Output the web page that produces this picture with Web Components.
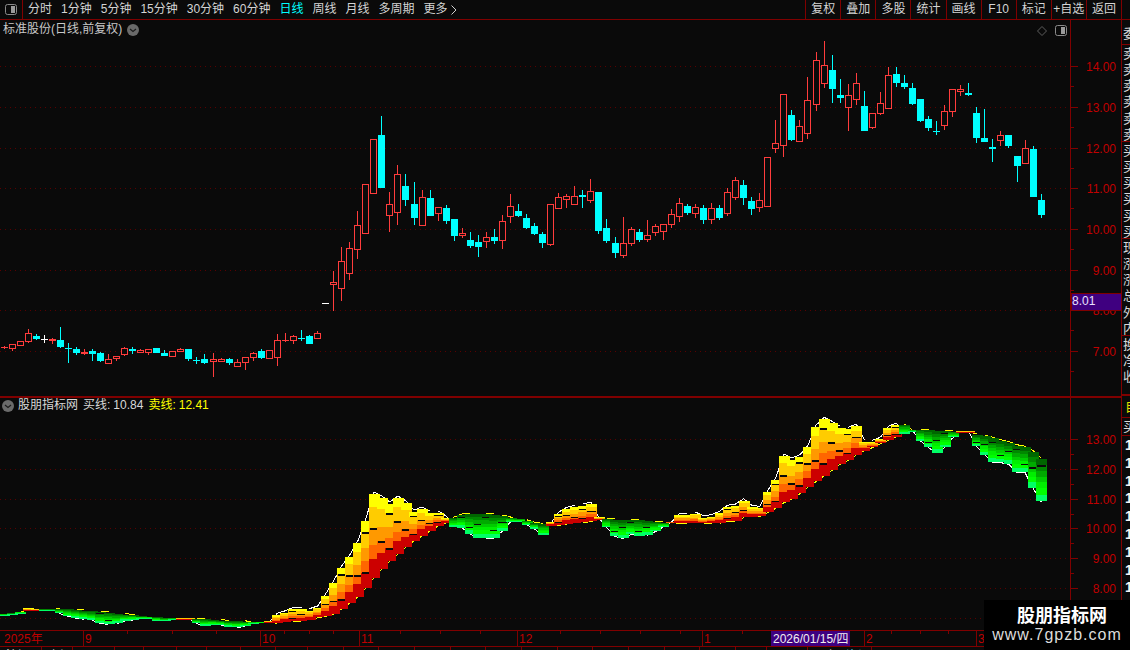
<!DOCTYPE html>
<html lang="zh">
<head>
<meta charset="utf-8">
<title>标准股份</title>
<style>
  html, body { margin: 0; padding: 0; background: #0a0a0a; }
</style>
</head>
<body>
<stock-terminal>
  <tool-bar slot="top"></tool-bar>
  <kline-panel slot="kline" title-text="标准股份(日线,前复权)"></kline-panel>
  <indicator-panel slot="indicator"></indicator-panel>
  <date-axis slot="dates"></date-axis>
  <quote-strip slot="quote"></quote-strip>
  <status-strip slot="status"></status-strip>
  <water-mark slot="mark"></water-mark>
</stock-terminal>

<script>
const SVG_FONT = '"Liberation Sans", "Noto Sans CJK SC", sans-serif';
const AXIS_RED = '#800000';
const LABEL_RED = '#c00000';
const GRID_RED = '#5a0000';

// every candle sits at this x, pitch read off the reference
const candleX = i => 4 + 8.04 * i;

// [boxTop, boxBottom, wickTop, wickBottom, colour], in 3x zoom units from an origin
function seg(origin, rows) {
    return rows.map(r => [
        origin + r[0] / 3, origin + r[1] / 3,
        origin + r[2] / 3, origin + r[3] / 3, r[4]
    ]);
}

const CANDLES = [
    ...seg(310, [
        [111,114,108,118,'r'],[103,116,103,125,'r'],[94,107,94,110,'r'],[70,95,57,98,'r'],
        [78,88,73,92,'c'],[87,90,76,101,'w'],[87,92,85,104,'R'],[90,110,51,114,'c'],
        [114,117,99,158,'c'],[117,129,112,137,'c'],[125,131,117,135,'R'],[123,131,118,155,'c'],
        [129,152,125,155,'c'],[148,161,132,161,'r'],[139,147,139,155,'r'],[115,136,111,138,'r'],
        [117,123,111,131,'c'],[121,128,118,129,'r'],[118,128,118,137,'r'],[114,129,114,130,'c'],
        [129,137,120,137,'c'],[124,140,124,140,'r'],[118,125,115,128,'r'],[117,147,117,152,'c'],
        [150,153,141,161,'c'],[147,159,132,161,'c'],[148,155,128,201,'r'],[148,155,145,158,'r'],
        [148,158,144,164,'c'],[157,170,148,170,'r'],[141,158,141,180,'r'],[130,143,125,153,'r'],
        [124,144,118,149,'c'],[121,146,121,146,'r'],[91,143,72,167,'r'],[90,93,69,96,'R'],
        [79,92,76,102,'r'],[85,88,60,92,'c'],[79,101,76,101,'c'],[70,86,63,87,'r']
    ]),
    ...seg(100, [
        [609,611,609,611,'w'],
        [547,556,513,632,'r'],[484,566,441,602,'r'],[445,521,427,540,'r'],[376,449,333,476,'r'],
        [253,401,253,401,'r'],[118,281,118,281,'r'],[105,264,48,264,'c'],[313,347,276,396,'r'],
        [223,338,195,375,'r'],[258,300,222,318,'c'],[312,354,246,375,'c'],[292,377,270,377,'r'],
        [294,348,270,348,'c'],[322,341,322,363,'r'],[324,363,315,372,'c'],[357,408,357,423,'c'],
        [400,407,384,414,'r'],[420,438,396,444,'c'],[426,441,405,471,'c'],[412,425,396,444,'r'],
        [411,423,387,432,'c'],[364,422,345,447,'r'],[319,350,282,369,'r'],[333,348,312,351,'c'],
        [354,384,342,387,'c'],[378,402,369,405,'c'],[402,429,396,444,'c'],[313,434,313,438,'r'],
        [292,326,279,326,'r'],[289,299,282,324,'r'],[289,314,258,314,'r'],[285,290,270,324,'c'],
        [274,302,237,309,'r'],[276,393,276,402,'c'],[384,423,357,429,'c'],[429,459,411,474,'c'],
        [430,467,351,474,'r'],[388,431,381,438,'r'],[396,420,387,426,'c'],[406,421,360,426,'r']
    ]),
    ...seg(0, [
        [678,699,672,708,'r'],[672,696,672,720,'r'],[642,675,627,684,'r'],[609,651,594,666,'r'],
        [618,639,612,645,'c'],[621,642,612,654,'r'],[624,660,615,672,'c'],[624,660,609,672,'r'],
        [624,654,615,660,'c'],[576,642,564,648,'r'],[540,594,531,600,'r'],[555,594,540,615,'c'],
        [603,627,591,645,'c']
    ]),
    ...seg(30, [
        [511,535,490,546,'r'],[382,530,382,533,'r'],[340,356,270,369,'r'],[193,349,193,383,'r'],
        [255,330,240,332,'c'],[289,335,270,335,'r'],[211,311,140,327,'r'],[91,224,66,242,'r'],
        [106,161,33,173,'r'],[120,176,75,219,'c'],[195,204,147,219,'c'],[196,233,162,303,'r'],
        [160,209,129,224,'r'],[228,303,183,303,'c'],[250,293,250,297,'r'],[220,251,186,255,'r'],
        [136,236,111,236,'r'],[132,159,111,171,'c'],[159,171,135,177,'c'],[174,222,159,225,'c'],
        [207,273,207,276,'c'],[267,294,258,303,'c'],[302,306,273,315,'c'],[244,287,225,300,'r'],
        [178,245,178,261,'r'],[178,185,165,198,'r'],[189,195,159,198,'c'],[249,324,231,339,'c'],
        [324,336,237,336,'c'],[351,356,327,396,'c'],[316,332,303,348,'r'],[315,348,315,354,'c'],
        [378,408,378,456,'c'],[355,401,330,401,'r'],[357,501,348,501,'c'],[510,555,492,564,'c']
    ])
];

// ribbon columns of the indicator: [top, bottom, 'R' rising / 'G' falling]
const RIBBON = [
    [614,615,'G'],[613.3,614.3,'G'],[611.7,613,'G'],[608.3,610.7,'R'],[609,610.7,'R'],
    [609.3,610,'G'],[609.3,610,'G'],[609.3,612.7,'G'],[609.3,615.3,'G'],[610,617.3,'G'],
    [610.7,618.3,'G'],[611.3,619.3,'G'],[612,622.7,'G'],[613,623.3,'G'],[613.7,622.7,'G'],
    [614.7,620,'G'],[615.3,619,'G'],[616.3,618.3,'G'],[616.7,618,'G'],[617.3,620,'G'],
    [618,620.7,'G'],[618,619.3,'G'],[618,619.3,'R'],[618,619.3,'R'],[619.3,622.7,'G'],
    [619.3,625,'G'],[620,624.3,'G'],[620.7,624.3,'G'],[621.3,626,'G'],[621.3,626.7,'G'],
    [621.7,625,'G'],[621.7,623.3,'G'],[621.7,622.7,'G'],[620.7,622.7,'R'],[615.3,622.7,'R'],
    [612.7,621.3,'R'],[609.3,620.7,'R'],[609.3,620,'R'],[610.7,619.3,'R'],[608,616.7,'R'],
    [596,615.3,'R'],[583,613,'R'],[568,608,'R'],[557,602,'R'],[543,596,'R'],
    [521,587,'R'],[494,577,'R'],[498,568,'R'],[504,560,'R'],[498,553,'R'],
    [503,546,'R'],[512,540,'R'],[509,535,'R'],[513,530,'R'],[513,525,'R'],
    [518,522,'R'],[518,526,'G'],[515,527,'G'],[514,533,'G'],[514,537,'G'],
    [514,537,'G'],[515,537,'G'],[516,530,'G'],[518,521,'G'],[518.7,521,'G'],
    [520.7,524,'G'],[523.3,528,'G'],[524.3,534,'G'],[522.3,525,'R'],[514,524.3,'R'],
    [509.3,523.3,'R'],[507.3,522.7,'R'],[506,521.7,'R'],[504,520.7,'R'],[517.3,519.3,'R'],
    [519.3,526.7,'G'],[520,535.3,'G'],[520,537.7,'G'],[520.3,533.3,'G'],[520.3,535,'G'],
    [521,534.3,'G'],[522,530.7,'G'],[522.7,526,'G'],[521.7,522.7,'R'],[515.3,522.7,'R'],
    [515.3,522.7,'R'],[514,522.7,'R'],[517.7,522.7,'R'],[516.7,522.7,'R'],[513.3,522.3,'R'],
    [507.3,520.7,'R'],[506,520,'R'],[500.7,516.7,'R'],[507.3,516,'R'],[508.3,515.3,'R'],
    [492.3,511.7,'R'],[480,507.3,'R'],[456,501.7,'R'],[460,498.3,'R'],[456.7,492.7,'R'],
    [447.3,486,'R'],[427.3,480.7,'R'],[419.3,475,'R'],[423.3,469.3,'R'],[428.3,463.3,'R'],
    [429.3,459.3,'R'],[426,454,'R'],[441.7,450,'R'],[442.3,446.7,'R'],[439.3,442.7,'R'],
    [428.3,439.3,'R'],[425,436,'R'],[425,433.3,'G'],[430,430.7,'G'],[430,440,'G'],
    [430,446.7,'G'],[430.7,452,'G'],[431.3,446.7,'G'],[431.7,436.7,'G'],[431,432.7,'R'],
    [430.7,432.7,'R'],[435,445.7,'G'],[436,454,'G'],[438.3,461.7,'G'],[440.7,461.7,'G'],
    [442.7,463.3,'G'],[445.7,471.7,'G'],[447.3,471.7,'G'],[451.7,487.3,'G'],[459,500.7,'G']
];

const RED_LAYERS = [
    ['#ffff00', .16], ['#ffcc00', .25], ['#ff9900', .2], ['#ff6600', .17], ['#cc0000', .22]
];
const GREEN_LAYERS = [
    ['#006600', .14], ['#008800', .14], ['#00aa00', .14], ['#00cc00', .14],
    ['#00ee00', .14], ['#00ff00', .16], ['#00ff66', .14]
];

function gridLines(ys) {
    return ys.map(y => `<line x1="0" x2="1070" y1="${y + .5}" y2="${y + .5}" stroke="${GRID_RED}" stroke-dasharray="1 4"/>`).join('');
}

function axisMarks(ticks, minorGap) {
    return ticks.map(({ y, label }) => `
        <rect x="1071" y="${y}" width="7" height="1" fill="${AXIS_RED}"/>
        <rect x="1071" y="${y + minorGap}" width="3" height="1" fill="${AXIS_RED}"/>
        ${label ? `<text x="1116" y="${y + 5}" text-anchor="end" font-size="12" fill="${LABEL_RED}">${label}</text>` : ''}
    `).join('');
}

const PANEL_ICON = `<svg width="12" height="11" viewBox="0 0 12 11">
    <rect x=".5" y=".5" width="11" height="10" rx="2" fill="none" stroke="#8a8a8a"/>
    <rect x="6" y="2" width="4" height="7" fill="#9a9a9a"/></svg>`;
const DOWN_BADGE = `<svg width="12" height="12" viewBox="0 0 12 12">
    <circle cx="6" cy="6" r="6" fill="#6a6a6a"/>
    <path d="M3 5 L6 7.5 L9 5" fill="none" stroke="#1c1c1c" stroke-width="1.2"/></svg>`;

class StockTerminal extends HTMLElement {
    constructor() {
        super();
        this.attachShadow({ mode: 'open' });
    }

    connectedCallback() {
        this.shadowRoot.innerHTML = `
            <style>
              :host { display: block; position: relative; width: 1130px; height: 650px; overflow: hidden; background: #0a0a0a; }
              .shell {
                display: grid;
                width: 1130px;
                height: 650px;
                grid-template-columns: 1121px 9px;
                grid-template-rows: 20px 376px 234px 17px 3px;
              }
              .top { grid-column: 1 / 3; grid-row: 1; }
              .kline { grid-column: 1; grid-row: 2; }
              .indicator { grid-column: 1; grid-row: 3; }
              .dates { grid-column: 1 / 3; grid-row: 4; }
              .quote { grid-column: 2; grid-row: 2 / 4; }
              .status { grid-column: 1 / 3; grid-row: 5; }
            </style>
            <div class="shell">
                <div class="top"><slot name="top"></slot></div>
                <div class="kline"><slot name="kline"></slot></div>
                <div class="indicator"><slot name="indicator"></slot></div>
                <div class="dates"><slot name="dates"></slot></div>
                <div class="quote"><slot name="quote"></slot></div>
                <div class="status"><slot name="status"></slot></div>
            </div>
            <slot name="mark"></slot>
        `;
    }
}

class ToolBar extends HTMLElement {
    constructor() {
        super();
        this.attachShadow({ mode: 'open' });
    }

    connectedCallback() {
        const periods = ['分时', '1分钟', '5分钟', '15分钟', '30分钟', '60分钟', '日线', '周线', '月线', '多周期'];
        const actions = ['复权', '叠加', '多股', '统计', '画线', 'F10', '标记', '+自选', '返回'];
        this.shadowRoot.innerHTML = `
            <style>
              :host {
                display: flex;
                height: 19px;
                border-bottom: 1px solid ${AXIS_RED};
                font: 12px/19px "Liberation Sans", "Noto Sans CJK SC", sans-serif;
                color: #d4d4d4;
                white-space: nowrap;
              }
              .switch { width: 22px; border-right: 1px solid ${AXIS_RED}; display: flex; align-items: center; justify-content: center; }
              .periods { display: flex; gap: 9px; padding-left: 5px; }
              .on { color: #00ffff; }
              .more { display: flex; align-items: center; gap: 3px; }
              .actions { display: flex; margin-left: auto; margin-right: 8px; border-right: 1px solid ${AXIS_RED}; }
              .actions span { width: 34.1px; border-left: 1px solid ${AXIS_RED}; text-align: center; }
            </style>
            <div class="switch">${PANEL_ICON}</div>
            <div class="periods">
                ${periods.map(p => `<span class="${p === '日线' ? 'on' : ''}">${p}</span>`).join('')}
                <span class="more">更多<svg width="6" height="10" viewBox="0 0 6 10"><path d="M.5 .5 L5 5 L.5 9.5" fill="none" stroke="#cfcfcf"/></svg></span>
            </div>
            <div class="actions">${actions.map(a => `<span>${a}</span>`).join('')}</div>
        `;
    }
}

class KlinePanel extends HTMLElement {
    constructor() {
        super();
        this.attachShadow({ mode: 'open' });
    }

    candle(c, i) {
        const [top, bottom, wickTop, wickBottom, kind] = c;
        const x = Math.floor(candleX(i));
        const t = Math.round(top), b = Math.max(Math.round(bottom), t + 1);
        const colour = { r: '#ff3c3c', R: '#ff3c3c', c: '#00ffff', w: '#ffffff' }[kind];
        let out = `<rect x="${x}" y="${Math.round(wickTop)}" width="1" height="${Math.round(wickBottom - wickTop)}" fill="${colour}"/>`;
        if (kind === 'r' && b - t > 1) {
            out += `<rect x="${x - 2.5}" y="${t + .5}" width="6" height="${b - t - 1}" fill="#0a0a0a" stroke="${colour}"/>`;
        } else {
            out += `<rect x="${x - 3}" y="${t}" width="7" height="${b - t}" fill="${colour}"/>`;
        }
        return out;
    }

    connectedCallback() {
        const ticks = ['14.00', '13.00', '12.00', '11.00', '10.00', '9.00', '8.00', '7.00']
            .map((label, n) => ({ label, y: Math.round(66.3 + 40.67 * n) }));
        this.shadowRoot.innerHTML = `
            <style>
              :host { display: block; position: relative; width: 1121px; height: 376px; }
              svg.plot { display: block; font-family: ${SVG_FONT}; }
              .title {
                position: absolute; left: 3px; top: 2px;
                display: flex; align-items: center; gap: 5px;
                font: 12px/15px "Liberation Sans", "Noto Sans CJK SC", sans-serif;
                color: #c8c8c8;
              }
              .tools { position: absolute; left: 1037px; top: 5px; display: flex; align-items: center; gap: 8px; }
            </style>
            <svg class="plot" width="1121" height="376" viewBox="0 20 1121 376" shape-rendering="crispEdges">
                ${gridLines(ticks.map(t => t.y))}
                ${CANDLES.map((c, i) => this.candle(c, i)).join('')}
                <rect x="1070" y="20" width="1" height="376" fill="${AXIS_RED}"/>
                ${axisMarks(ticks, 20)}
                <rect x="1071" y="293" width="50" height="17" fill="#3f0080" stroke="${AXIS_RED}" stroke-width="1"/>
                <text x="1072" y="305" font-size="12" fill="#e8e0ff">8.01</text>
            </svg>
            <div class="title"><span>${this.getAttribute('title-text')}</span>${DOWN_BADGE}</div>
            <div class="tools">
                <svg width="10" height="10" viewBox="0 0 10 10"><path d="M5 .5 L9.5 5 L5 9.5 L.5 5 Z" fill="none" stroke="#5c5c5c"/></svg>
                ${PANEL_ICON}
            </div>
        `;
    }
}

class IndicatorPanel extends HTMLElement {
    constructor() {
        super();
        this.attachShadow({ mode: 'open' });
    }

    column(c, i) {
        const [top, bottom, trend] = c;
        const x = Math.round(candleX(i) - 5);
        const layers = trend === 'R' ? RED_LAYERS : GREEN_LAYERS;
        const height = Math.max(bottom - top, 1);
        const every = trend === 'R' ? 3 : 6;
        let y = top, out = '';
        layers.forEach(([colour, share]) => {
            const h = height * share;
            out += `<rect x="${x}" y="${y.toFixed(1)}" width="11" height="${(h + .6).toFixed(1)}" fill="${colour}"/>`;
            y += h;
        });
        if (height > 10) {
            let d = top;
            layers.forEach(([, share], n) => {
                d += height * share;
                if (n < layers.length - 1 && (i * 2 + n) % every === 0) {
                    out += `<rect x="${x + 1}" y="${Math.round(d)}" width="9" height="${height > 30 ? 2 : 1}" fill="#0a0a0a"/>`;
                }
            });
        }
        return out;
    }

    // drawn under the columns, so only the part clear of them shows; flat stretches come out as dashes
    line(pick, colour) {
        let out = '';
        for (let i = 0; i < RIBBON.length - 1; i++) {
            const a = pick(RIBBON[i]), b = pick(RIBBON[i + 1]);
            if (Math.abs(a - b) < 1.5 && i % 3 !== 0) continue;
            out += `<line x1="${candleX(i).toFixed(1)}" y1="${a.toFixed(1)}" x2="${candleX(i + 1).toFixed(1)}" y2="${b.toFixed(1)}" stroke="${colour}"/>`;
        }
        return out;
    }

    connectedCallback() {
        const ticks = ['13.00', '12.00', '11.00', '10.00', '9.00', '8.00', '']
            .map((label, n) => ({ label, y: Math.round(439.3 + 29.7 * n) }));
        const mid = c => (c[0] + c[1]) / 2;
        const white = c => c[1] - c[0] < 3 ? mid(c) : c[2] === 'R' ? c[0] - 2 : c[1] + 1;
        const yellow = c => c[1] - c[0] < 3 ? mid(c) : c[2] === 'R' ? c[1] + 1 : c[0] - 1;
        this.shadowRoot.innerHTML = `
            <style>
              :host { display: block; position: relative; width: 1121px; height: 234px; border-top: 2px solid ${AXIS_RED}; box-sizing: border-box; }
              svg.plot { display: block; font-family: ${SVG_FONT}; }
              .title {
                position: absolute; left: 2px; top: 0;
                display: flex; align-items: center;
                font: 12px/15px "Liberation Sans", "Noto Sans CJK SC", sans-serif;
                color: #d8d8d8;
                white-space: nowrap;
              }
              .name { margin-left: 4px; }
              .buy { margin-left: 5px; display: flex; gap: 3px; }
              .sell { margin-left: 5px; display: flex; gap: 3px; color: #ffff00; }
            </style>
            <svg class="plot" width="1121" height="232" viewBox="0 398 1121 232" shape-rendering="crispEdges">
                ${gridLines(ticks.map(t => t.y))}
                ${this.line(white, '#ffffff')}
                ${this.line(yellow, '#ffff00')}
                ${RIBBON.map((c, i) => this.column(c, i)).join('')}
                <rect x="1070" y="398" width="1" height="232" fill="${AXIS_RED}"/>
                ${axisMarks(ticks, 15)}
            </svg>
            <div class="title">${DOWN_BADGE}<span class="name">股朋指标网</span><span class="buy"><span>买线:</span><span>10.84</span></span><span class="sell"><span>卖线:</span><span>12.41</span></span></div>
        `;
    }
}

class DateAxis extends HTMLElement {
    constructor() {
        super();
        this.attachShadow({ mode: 'open' });
    }

    connectedCallback() {
        const months = [[83, '9'], [260, '10'], [359, '11'], [517, '12'], [702, '1'], [864, '2'], [976, '3']];
        const short = [127, 172, 216, 284, 309, 333, 400, 440, 480, 560, 600, 640, 680, 742, 891, 920, 948, 1005, 1035];
        this.shadowRoot.innerHTML = `
            <style>
              :host { display: block; height: 17px; box-sizing: border-box; border-top: 1px solid ${AXIS_RED}; border-bottom: 1px solid ${AXIS_RED}; }
              svg { display: block; font-family: ${SVG_FONT}; }
            </style>
            <svg width="1130" height="15" viewBox="0 631 1130 15">
                <g shape-rendering="crispEdges" fill="${AXIS_RED}">
                    ${short.map(x => `<rect x="${x}" y="631" width="1" height="3"/>`).join('')}
                    ${months.map(([x]) => `<rect x="${x}" y="631" width="1" height="15"/>`).join('')}
                </g>
                <text x="4" y="643" font-size="12" fill="${LABEL_RED}">2025年</text>
                ${months.map(([x, m]) => `<text x="${x + 2}" y="643" font-size="12" fill="${LABEL_RED}">${m}</text>`).join('')}
                <rect x="771" y="631" width="79" height="15" fill="#3f0080" shape-rendering="crispEdges"/>
                <text x="773" y="643" font-size="12" fill="#f0f0f0">2026/01/15/四</text>
            </svg>
        `;
    }
}

class QuoteStrip extends HTMLElement {
    constructor() {
        super();
        this.attachShadow({ mode: 'open' });
    }

    connectedCallback() {
        const group = (rows, cls) => `<div class="group ${cls || ''}">${rows.map(t => `<div class="row">${t}</div>`).join('')}</div>`;
        this.shadowRoot.innerHTML = `
            <style>
              :host {
                display: block; width: 9px; height: 610px; box-sizing: border-box;
                border-left: 1px solid ${AXIS_RED}; overflow: hidden;
                font: 13px/16.17px "Noto Sans CJK SC", sans-serif; color: #d8d8d8; white-space: nowrap;
              }
              .group { border-bottom: 1px solid ${AXIS_RED}; box-sizing: border-box; }
              .row { height: 16.17px; padding-left: 1px; overflow: hidden; }
              .head { height: 25px; }
              .head .row { height: 25px; line-height: 25px; }
              .sell { height: 97px; }
              .buy { height: 97px; }
              .info { height: 97px; }
              .rest { height: 60px; border-bottom: 2px solid ${AXIS_RED}; }
              .flag { height: 22px; color: #e0e000; }
              .flag .row { line-height: 20px; height: 21px; padding-left: 3px; }
              .pick { height: 18px; }
              .pick .row { height: 17px; padding-left: 1px; }
              .values .row { height: 17.8px; line-height: 18px; padding-left: 3px; font: bold 14px/18px "Liberation Sans", sans-serif; color: #f4f4f4; }
            </style>
            ${group(['委比'], 'head')}
            ${group(['卖五', '卖四', '卖三', '卖二', '卖一', '卖'], 'sell')}
            ${group(['买一', '买二', '买三', '买四', '买五', '买'], 'buy')}
            ${group(['现价', '涨跌', '涨幅', '总手', '外盘', '内盘'], 'info')}
            ${group(['换手', '净资', '收益'], 'rest')}
            ${group(['自'], 'flag')}
            ${group(['买'], 'pick')}
            <div class="values">${Array(9).fill('10.84').map(v => `<div class="row">${v}</div>`).join('')}</div>
        `;
    }
}

class StatusStrip extends HTMLElement {
    constructor() {
        super();
        this.attachShadow({ mode: 'open' });
    }

    connectedCallback() {
        const filler = Array(12).fill(0).map(() => `<span style="width:35.67px"></span>`).join('');
        this.shadowRoot.innerHTML = `
            <style>
              :host { display: flex; height: 3px; overflow: hidden; font: 12px/15px "Noto Sans CJK SC", sans-serif; color: #dcdcdc; }
              span { display: block; box-sizing: border-box; height: 3px; border-right: 1px solid ${AXIS_RED}; padding-left: 6px; white-space: nowrap; overflow: hidden; }
              .mix b { font-weight: 400; }
              .mix i { font-style: normal; color: #40e0ff; margin-left: 9px; }
            </style>
            <span style="width:42px">沪深</span><span style="width:31px">上证</span>
            <span style="width:42px"></span><span style="width:29px"></span><span style="width:33px"></span>
            <span style="width:30px"></span><span style="width:34px"></span><span style="width:35px"></span><span style="width:32px"></span>
            ${filler}
            <span style="width:31px"></span><span style="width:41px"></span>
            <span class="mix" style="width:64px;padding-left:17px"><b>上</b><i>资讯</i></span>
        `;
    }
}

class WaterMark extends HTMLElement {
    constructor() {
        super();
        this.attachShadow({ mode: 'open' });
    }

    connectedCallback() {
        this.shadowRoot.innerHTML = `
            <style>
              :host {
                position: absolute; left: 984px; top: 600px; width: 146px; height: 50px;
                background: #000; color: #fff; text-align: center;
                font-family: "Noto Sans CJK SC", "Liberation Sans", sans-serif;
              }
              .name { font-size: 18px; line-height: 20px; font-weight: 700; margin-top: 4px; padding-left: 10px; }
              .url { font: 16px/18px "Liberation Sans", sans-serif; letter-spacing: 1px; color: #dcdcdc; margin-top: 2px; }
            </style>
            <div class="name">股朋指标网</div>
            <div class="url">www.7gpzb.com</div>
        `;
    }
}

customElements.define('stock-terminal', StockTerminal);
customElements.define('tool-bar', ToolBar);
customElements.define('kline-panel', KlinePanel);
customElements.define('indicator-panel', IndicatorPanel);
customElements.define('date-axis', DateAxis);
customElements.define('quote-strip', QuoteStrip);
customElements.define('status-strip', StatusStrip);
customElements.define('water-mark', WaterMark);
</script>
</body>
</html>
